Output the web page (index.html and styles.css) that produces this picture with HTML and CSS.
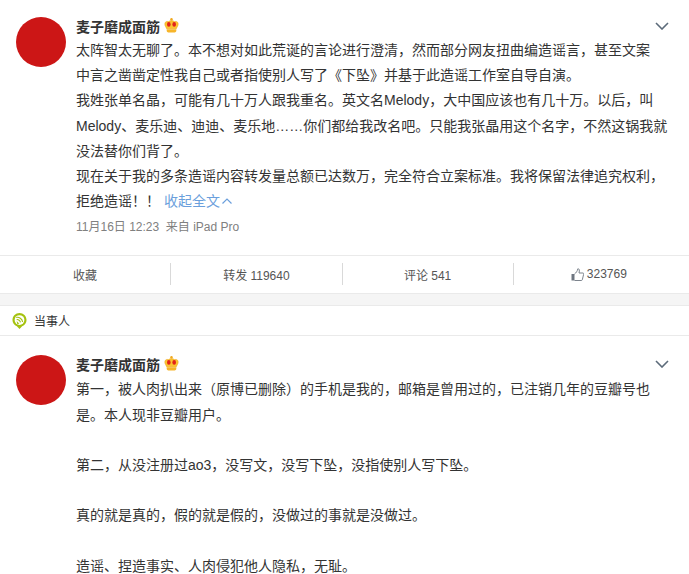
FILE: index.html
```html
<!DOCTYPE html>
<html lang="zh-CN">
<head>
    <meta charset="UTF-8">
    <title>麦子磨成面筋</title>
    <link rel="stylesheet" href="styles.css">
</head>
<body>
    <div class="card">
        <div class="post">
            <div class="avatar"></div>
            <div class="post-main">
                <div class="name-row">
                    <span class="name">麦子磨成面筋</span>
                    <svg class="crown" viewBox="0 0 14 14" width="15" height="15">
                        <circle cx="7" cy="1.300" r="1.200" fill="#f0a81e"/>
                        <path d="M0.800 5.500C0.800 3.300 3 2.800 4 3.500C5 2.300 9 2.300 10 3.500C11 2.800 13.200 3.300 13.200 5.500C13.200 7.500 12 8.500 11.500 10H2.500C2 8.500 0.800 7.500 0.800 5.500Z" fill="#fbc531" stroke="#f0a81e" stroke-width="0.600"/>
                        <ellipse cx="4.500" cy="6" rx="1.700" ry="2.200" fill="#e2231a"/>
                        <ellipse cx="9.500" cy="6" rx="1.700" ry="2.200" fill="#e2231a"/>
                        <path d="M2.500 10.500H11.500V12C11.500 13 10.500 13.600 10 13.600H4C3.500 13.600 2.500 13 2.500 12Z" fill="#f7b52a"/>
                    </svg>
                </div>
                <div class="text">
                    <p>太阵智太无聊了。本不想对如此荒诞的言论进行澄清，然而部分网友扭曲编造谣言，甚至文案<br>中言之凿凿定性我自己或者指使别人写了《下坠》并基于此造谣工作室自导自演。</p>
                    <p>我姓张单名晶，可能有几十万人跟我重名。英文名Melody，大中国应该也有几十万。以后，叫Melody、麦乐迪、迪迪、麦乐地……你们都给我改名吧。只能我张晶用这个名字，不然这锅我就没法替你们背了。</p>
                    <p>现在关于我的多条造谣内容转发量总额已达数万，完全符合立案标准。我将保留法律追究权利，拒绝造谣！！ <a class="more">收起全文<svg class="up" viewBox="0 0 10 6" width="10" height="6"><path d="M0.500 5.500L5 1L9.500 5.500" fill="none" stroke="#6b9fdc" stroke-width="1.200"/></svg></a></p>
                </div>
                <div class="meta">11月16日 12:23&nbsp; 来自 iPad Pro</div>
            </div>
            <svg class="chevron" viewBox="0 0 14 8" width="14" height="8"><path d="M1 1L7 7L13 1" fill="none" stroke="#5c6b7a" stroke-width="1.600"/></svg>
        </div>
        <div class="actions">
            <div class="action">收藏</div>
            <div class="action">转发 119640</div>
            <div class="action">评论 541</div>
            <div class="action">
                <svg class="thumb" viewBox="0 0 13 13" width="13" height="13">
                    <path d="M0.500 6H3.500V12.500H0.500Z" fill="#6e7680"/>
                    <path d="M3.500 6C5 5 6.500 3 6.800 0.800C8.200 0.500 8.800 2 8 5H12C12.800 5 12.800 6 12.500 6.800L11.300 11.800C11.100 12.300 10.800 12.500 10.300 12.500H3.500" fill="none" stroke="#6e7680" stroke-width="0.900"/>
                </svg>
                <span>323769</span>
            </div>
        </div>
    </div>

    <div class="gap"></div>

    <div class="tag-bar">
        <svg class="pin" viewBox="0 0 16 18" width="15" height="18">
            <path d="M8 17.500L5.200 14.600C2.300 13.500 0.500 11 0.500 8C0.500 3.900 3.900 0.500 8 0.500C12.100 0.500 15.500 3.900 15.500 8C15.500 11 13.700 13.500 10.800 14.600Z" fill="#a5c20f"/>
            <circle cx="8" cy="8" r="5.200" fill="#fff"/>
            <path d="M4.500 5.200C7.500 4.500 11 6.500 11.300 10M5 7.500C6.800 7.200 8.800 8.500 9 10.500" fill="none" stroke="#a5c20f" stroke-width="1.200"/>
            <path d="M5 9L7.800 11.800L5.500 12.300Z" fill="#a5c20f"/>
        </svg>
        <span>当事人</span>
    </div>

    <div class="card card-last">
        <div class="post">
            <div class="avatar"></div>
            <div class="post-main">
                <div class="name-row">
                    <span class="name">麦子磨成面筋</span>
                    <svg class="crown" viewBox="0 0 14 14" width="15" height="15">
                        <circle cx="7" cy="1.300" r="1.200" fill="#f0a81e"/>
                        <path d="M0.800 5.500C0.800 3.300 3 2.800 4 3.500C5 2.300 9 2.300 10 3.500C11 2.800 13.200 3.300 13.200 5.500C13.200 7.500 12 8.500 11.500 10H2.500C2 8.500 0.800 7.500 0.800 5.500Z" fill="#fbc531" stroke="#f0a81e" stroke-width="0.600"/>
                        <ellipse cx="4.500" cy="6" rx="1.700" ry="2.200" fill="#e2231a"/>
                        <ellipse cx="9.500" cy="6" rx="1.700" ry="2.200" fill="#e2231a"/>
                        <path d="M2.500 10.500H11.500V12C11.500 13 10.500 13.600 10 13.600H4C3.500 13.600 2.500 13 2.500 12Z" fill="#f7b52a"/>
                    </svg>
                </div>
                <div class="text">
                    <p>第一，被人肉扒出来（原博已删除）的手机是我的，邮箱是曾用过的，已注销几年的豆瓣号也是。本人现非豆瓣用户。</p>
                    <p class="blank">&nbsp;</p>
                    <p>第二，从没注册过ao3，没写文，没写下坠，没指使别人写下坠。</p>
                    <p class="blank">&nbsp;</p>
                    <p>真的就是真的，假的就是假的，没做过的事就是没做过。</p>
                    <p class="blank">&nbsp;</p>
                    <p>造谣、捏造事实、人肉侵犯他人隐私，无耻。</p>
                </div>
            </div>
            <svg class="chevron" viewBox="0 0 14 8" width="14" height="8"><path d="M1 1L7 7L13 1" fill="none" stroke="#5c6b7a" stroke-width="1.600"/></svg>
        </div>
    </div>
</body>
</html>
```

FILE: styles.css
```css
html, body {
    height: 574px;
    overflow: hidden;
}

body {
    margin: 0;
    background-color: #fff;
    color: #333;
    font-family: "Liberation Sans", "Noto Sans CJK SC", sans-serif;
    font-size: 14px;
}

.post {
    display: flex;
    padding: 17px 20px 0 16px;
}

.card-last .post {
    padding-top: 19px;
}

.avatar {
    flex: none;
    width: 50px;
    height: 50px;
    margin-right: 10px;
    border-radius: 50%;
    background-color: #cc1616;
}

.post-main {
    flex: 1;
    min-width: 0;
}

.name-row {
    display: flex;
    align-items: center;
    height: 18px;
    gap: 4px;
}

.name {
    font-weight: bold;
}

.crown {
    margin-top: -2px;
}

.text {
    margin-top: 3px;
    width: 594px;
    line-height: 25.2px;
}

.card-last .text {
    margin-top: 4px;
}

.text p {
    margin: 0;
}

.more {
    color: #6b9fdc;
}

.up {
    margin-left: 2px;
    vertical-align: 2px;
}

.meta {
    margin-top: 4px;
    color: #808080;
    font-size: 12px;
    line-height: 18px;
}

.chevron {
    flex: none;
    margin-top: 5px;
}

.actions {
    display: flex;
    margin-top: 19px;
    padding: 7px 5px 8px 0;
    border-top: 1px solid #eaeaea;
    border-bottom: 1px solid #eaeaea;
}

.action {
    flex: 1;
    display: flex;
    align-items: center;
    justify-content: center;
    height: 22px;
    gap: 3px;
    font-size: 12px;
    color: #555;
    border-right: 1px solid #d9d9d9;
}

.action:last-child {
    border-right: none;
}

.gap {
    height: 11px;
    background-color: #f5f5f5;
}

.tag-bar {
    display: flex;
    align-items: center;
    height: 29px;
    padding-left: 12px;
    gap: 7px;
    font-size: 12px;
    border-top: 1px solid #eaeaea;
    border-bottom: 1px solid #eaeaea;
}
```
